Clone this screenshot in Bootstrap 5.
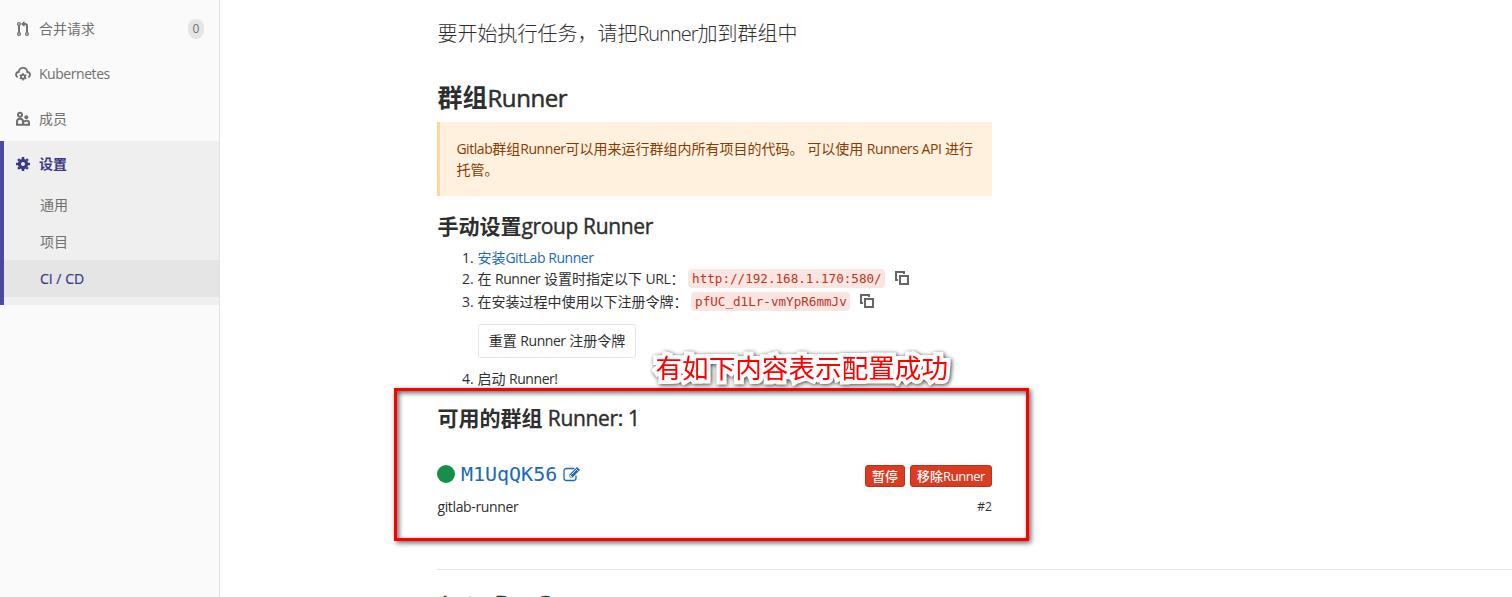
<!DOCTYPE html>
<html lang="zh-CN">
<head>
<meta charset="utf-8">
<meta name="viewport" content="width=device-width, initial-scale=1">
<title>CI / CD</title>
<link rel="stylesheet" href="https://cdn.jsdelivr.net/npm/bootstrap@5.3.0/dist/css/bootstrap.min.css">
<style>
body{font-family:"Open Sans","Noto Sans CJK SC",sans-serif;font-size:14px;line-height:21px;color:#2e2e2e;height:597px;overflow:hidden}
.en{letter-spacing:-.45px}
.sidebar{width:220px;background:#fafafa;border-right:1px solid #e1e1e1;color:#707070;padding-top:6px}
.side-link{height:45px;padding:0 15px}
.side-link svg{width:16px;height:16px;margin-right:8px}
.counter{width:16px;height:20px;background:#e5e5e5;font-size:12px;line-height:20px}
.side-active{background:#efefef;box-shadow:inset 4px 0 #4b4ba3;height:164px}
.side-active .side-link{color:#393982;font-weight:600}
.sub-link{height:37px;padding-left:40px}
.sub-link.current{background:rgba(0,0,0,.04);color:#393982;-webkit-text-stroke:.2px}
.main-col{padding-left:217.400px;height:597px;overflow:hidden}
.pane{width:554.600px}
.intro{font-size:20px;font-weight:300;line-height:28px;padding-top:20px;height:82px}
.intro .en{letter-spacing:-1px}
h4{font-size:25px;line-height:30px;font-weight:700;margin:0;height:40px}
h4 .en{font-size:24px;font-weight:400;letter-spacing:-.4px;-webkit-text-stroke:.5px}
h5{font-size:21px;line-height:28px;font-weight:700;margin:0}
h5 .en{font-weight:400;letter-spacing:-.35px;-webkit-text-stroke:.4px}
.callout{background:#fff1de;border-left:3px solid #ffd59b;color:#853c03;height:74px;padding:16px 12px 16px 16px}
.steps{margin:7px 0 0;padding-left:40px}
.step-row{height:21px}
.token{background:#fae5e1;color:#c0341d;border-radius:4px;padding:2px 3.7px;font:12.6px/15px "DejaVu Sans Mono",monospace;height:19px}
.copy{width:14px;height:14px;margin:-2px 0 0 10px}
.link{color:#1b69b6}
.btn-reset{border:1px solid #e5e5e5;border-radius:3px;font-size:14px;height:34px;width:158px;padding:0;line-height:30px;color:#2e2e2e;margin:12px 0 10px .6px}
.dot{width:18px;height:18px;background:#168f48}
.rname{font:20px/24px "DejaVu Sans Mono",monospace;margin:0 6px 0 5.500px}
.btn-remove{background:#db3b21;border:1px solid #b9321c;color:#fff;border-radius:3px;font-size:13px;line-height:18px;height:22px;padding:1px 0;font-weight:500}
.runner-row{height:28px;margin-top:28px}
.rule{height:1px;background:#e5e5e5;margin-top:52px}
.frame{left:394px;top:388px;width:635px;height:153px;border:3px solid #f00;box-shadow:2px 2px 5px rgba(0,0,0,.6),inset 2px 2px 5px rgba(0,0,0,.6)}
.note{left:655.500px;top:348px;font:26.6px/38px "Noto Sans CJK SC",sans-serif;color:#f00;white-space:nowrap;-webkit-text-stroke:8px #fff;paint-order:stroke fill;stroke-linejoin:round;filter:drop-shadow(1px 1px 2px rgba(0,0,0,.75))}
</style>
</head>
<body class="d-flex bg-white position-relative">
<nav class="sidebar flex-shrink-0">
  <div class="side-link d-flex align-items-center">
    <svg viewBox="0 0 16 16" fill="none" stroke="#707070" stroke-width="1.3"><circle cx="4" cy="3" r="1.400"/><circle cx="4" cy="13" r="1.400"/><circle cx="12" cy="13" r="1.400"/><path d="M4 4.500v7M12 11.500V5q0-2-2-2H8.500" stroke-width="2"/><path d="M6 3L9.500 0v6z" fill="#707070" stroke="none"/></svg>
    <span>合并请求</span><span class="counter rounded-pill text-center ms-auto">0</span>
  </div>
  <div class="side-link d-flex align-items-center">
    <svg viewBox="0 0 16 16" fill="none" stroke="#707070" stroke-width="1.800"><path d="M2.800 11.200C1.500 10.800 1 9.800 1 8.800c0-1.600 1.200-2.700 2.700-2.800C4 3.300 5.800 1.900 8 1.900s4 1.400 4.300 4.100C13.800 6.100 15 7.200 15 8.800c0 1-.5 2-1.800 2.400"/><circle cx="8" cy="10.800" r="2"/><path d="M8 7v1.800M8 12.800v1.800M4.700 8.900l1.500.9M9.800 11.800l1.500.9M4.700 12.700l1.500-.9M9.800 9.800l1.500-.9" stroke-width="1.500"/></svg>
    <span class="en">Kubernetes</span>
  </div>
  <div class="side-link d-flex align-items-center">
    <svg viewBox="0 0 16 16" fill="none" stroke="#707070" stroke-width="2"><circle cx="5" cy="3.800" r="2"/><path d="M2 13.800v-3q0-3 3-3t3 3v3zM8 13.800h6v-1.800q0-2.300-2.500-2.300Q9.500 9.700 8.500 11"/><circle cx="11.300" cy="6.300" r="2" fill="#707070" stroke="none"/></svg>
    <span>成员</span>
  </div>
  <div class="side-active">
    <div class="side-link d-flex align-items-center">
      <svg viewBox="0 0 16 16" fill="none" stroke="#393982"><circle cx="8" cy="8" r="3.600" stroke-width="3.200"/><path d="M8 1v2M8 13v2M1 8h2M13 8h2M3.050 3.050l1.400 1.400M11.550 11.550l1.400 1.400M3.050 12.950l1.400-1.400M11.550 4.450l1.400-1.400" stroke-width="2.600"/></svg>
      <span>设置</span>
    </div>
    <div class="sub-link d-flex align-items-center">通用</div>
    <div class="sub-link d-flex align-items-center">项目</div>
    <div class="sub-link current d-flex align-items-center">CI / CD</div>
  </div>
</nav>
<main class="main-col flex-grow-1">
  <div class="pane">
    <div class="intro">要开始执行任务，请把<span class="en">Runner</span>加到群组中</div>
    <h4>群组<span class="en">Runner</span></h4>
    <div class="callout"><span class="en">Gitlab</span>群组<span class="en">Runner</span>可以用来运行群组内所有项目的代码。 可以使用 <span class="en">Runners API</span> 进行托管。</div>
    <h5 class="pt-3">手动设置<span class="en">group Runner</span></h5>
    <ol class="steps">
      <li><div class="step-row d-flex align-items-center link">安装<span class="en">GitLab Runner</span></div></li>
      <li><div class="step-row d-flex align-items-center"><span>在 <span class="en">Runner</span> 设置时指定以下 <span class="en">URL</span>：</span><code class="token ms-1">http://192.168.1.170:580/</code>
        <svg class="copy" viewBox="0 0 14 14" fill="none" stroke="#666" stroke-width="2"><path d="M5 5h8v8H5zM3 9H1V1h8v2"/></svg></div></li>
      <li style="padding-top:2px"><div class="step-row d-flex align-items-center"><span>在安装过程中使用以下注册令牌：</span><code class="token ms-1">pfUC_d1Lr-vmYpR6mmJv</code>
        <svg class="copy" viewBox="0 0 14 14" fill="none" stroke="#666" stroke-width="2"><path d="M5 5h8v8H5zM3 9H1V1h8v2"/></svg></div>
        <button class="btn btn-reset d-block bg-white">重置 <span class="en">Runner</span> 注册令牌</button></li>
      <li>启动 <span class="en">Runner!</span></li>
    </ol>
    <h5 style="padding-top:15px">可用的群组 <span class="en">Runner: 1</span></h5>
    <div class="runner-row d-flex align-items-center">
      <span class="dot rounded-circle"></span><span class="rname link">M1UqQK56</span>
      <svg width="18" height="16" viewBox="0 0 18 16" fill="none" stroke="#1b69b6" stroke-width="1.300"><path d="M11.500 2.500H3.500q-2.500 0-2.500 2.500v7q0 2.500 2.500 2.500h7q2.500 0 2.500-2.500V9.500"/><path d="M6.500 8.500L14 1l3 3-7.500 7.500H6.500z" fill="#1b69b6" stroke="none"/><path d="M8.500 8.500L14 3M12.500 2.500l3 3M7.500 9v1.500H9" stroke="#fff" stroke-width=".8"/></svg>
      <div class="d-flex ms-auto pt-1"><button class="btn btn-remove" style="width:40px;margin-right:5px">暂停</button><button class="btn btn-remove" style="width:82px">移除<span class="en">Runner</span></button></div>
    </div>
    <div class="d-flex justify-content-between mt-2"><span style="letter-spacing:-.35px">gitlab-runner</span><small style="font-size:12px">#2</small></div>
  </div>
  <div class="rule"></div>
  <h4 style="padding-top:18px"><span class="en">Auto DevOps</span></h4>
</main>
<div class="frame position-absolute"></div>
<div class="note position-absolute">有如下内容表示配置成功</div>
<script src="https://cdn.jsdelivr.net/npm/bootstrap@5.3.0/dist/js/bootstrap.bundle.min.js"></script>
</body>
</html>
